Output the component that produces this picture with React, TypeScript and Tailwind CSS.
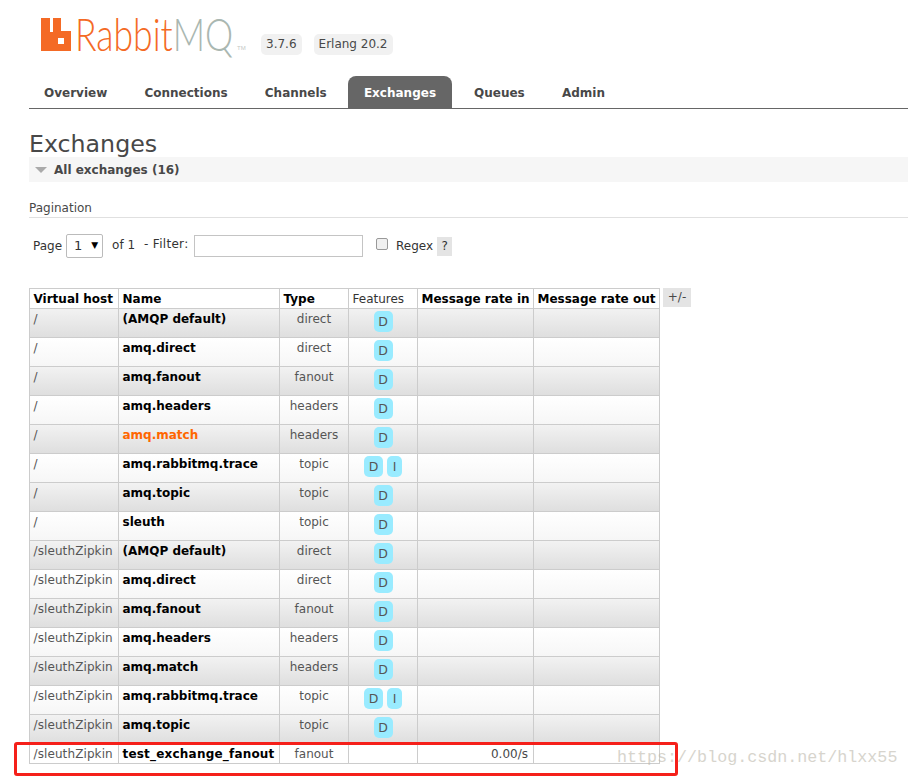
const tabs = ['Overview', 'Connections', 'Channels', 'Exchanges', 'Queues', 'Admin'];

const rows = [
  { vhost: '/', name: '(AMQP default)', type: 'direct', features: ['D'] },
  { vhost: '/', name: 'amq.direct', type: 'direct', features: ['D'] },
  { vhost: '/', name: 'amq.fanout', type: 'fanout', features: ['D'] },
  { vhost: '/', name: 'amq.headers', type: 'headers', features: ['D'] },
  { vhost: '/', name: 'amq.match', type: 'headers', features: ['D'], highlight: true },
  { vhost: '/', name: 'amq.rabbitmq.trace', type: 'topic', features: ['D', 'I'] },
  { vhost: '/', name: 'amq.topic', type: 'topic', features: ['D'] },
  { vhost: '/', name: 'sleuth', type: 'topic', features: ['D'] },
  { vhost: '/sleuthZipkin', name: '(AMQP default)', type: 'direct', features: ['D'] },
  { vhost: '/sleuthZipkin', name: 'amq.direct', type: 'direct', features: ['D'] },
  { vhost: '/sleuthZipkin', name: 'amq.fanout', type: 'fanout', features: ['D'] },
  { vhost: '/sleuthZipkin', name: 'amq.headers', type: 'headers', features: ['D'] },
  { vhost: '/sleuthZipkin', name: 'amq.match', type: 'headers', features: ['D'] },
  { vhost: '/sleuthZipkin', name: 'amq.rabbitmq.trace', type: 'topic', features: ['D', 'I'] },
  { vhost: '/sleuthZipkin', name: 'amq.topic', type: 'topic', features: ['D'] },
];

function Logo() {
  return (
    <div className="flex w-[204px] items-start">
      <svg width="30" height="33" viewBox="0 0 30 33" className="mt-[1px] shrink-0">
        <path
          fillRule="evenodd"
          fill="#f46a25"
          d="M0 0H9V14H12V0H20V13H30V33H0ZM17 20V26H23V20Z"
        />
      </svg>
      <span className="ml-[4px] -mt-[9px] origin-left scale-x-[0.79] font-['Lato'] text-[45px] leading-[52px] font-light whitespace-nowrap text-[#f46a25]">
        Rabbit<span className="text-[#aab7b1]">MQ</span>
      </span>
      <span className="absolute top-[44px] left-[237px] font-['Liberation_Sans'] text-[6px] leading-[8px] text-[#c4c9c6]">TM</span>
    </div>
  );
}

function Badge({ label }: { label: string }) {
  return (
    <span className="rounded-[5px] bg-[#f1f1f1] px-[5px] text-[12px] leading-[21px] text-[#484848]">{label}</span>
  );
}

export default function App() {
  return (
    <div className="relative h-[777px] w-[908px] overflow-hidden bg-white font-['DejaVu_Sans',sans-serif] text-[12px] text-[#484848]">
      <div className="flex h-[76px] items-start pt-[17px] pl-[41px]">
        <Logo />
        <div className="mt-[17px] ml-[16px] flex gap-[12px]">
          <Badge label="3.7.6" />
          <Badge label="Erlang 20.2" />
        </div>
      </div>

      <div className="ml-[29px] flex h-[33px] border-b border-[#666] pl-[15px]">
        {tabs.map((tab) => (
          <div
            key={tab}
            className={
              tab === 'Exchanges'
                ? '-ml-[16px] mr-[22px] rounded-t-[8px] bg-[#666] px-[16px] pt-[2px] text-[12px] leading-[30px] font-bold text-white'
                : 'mr-[37.2px] pt-[2px] text-[12px] leading-[30px] font-bold text-[#484848]'
            }
          >
            {tab}
          </div>
        ))}
      </div>

      <div className="ml-[29px]">
        <h1 className="mt-[22px] text-[23.7px] leading-[26px] font-normal text-[#484848]">Exchanges</h1>
        <div className="flex h-[25px] items-center bg-[#f6f6f6] pl-[6px]">
          <span className="h-0 w-0 border-x-[6px] border-t-[6px] border-x-transparent border-t-[#aaa]" />
          <span className="ml-[7px] text-[12px] font-bold text-[#484848]">All exchanges (16)</span>
        </div>

        <div className="mt-[19px] h-[17px] border-b border-[#e0e0e0] text-[12px] leading-[15px]">Pagination</div>

        <div className="mt-[15px] flex h-[25px] items-center pl-[4px] text-[#333]">
          <span>Page</span>
          <div className="ml-[4px] flex h-[24px] w-[37px] items-center rounded-[2px] border border-[#bbb] pl-[7px] text-[13px]">
            <span>1</span>
            <span className="ml-[9px] text-[9px] text-black">▼</span>
          </div>
          <span className="ml-[9px] -mt-[2px]">of 1</span>
          <span className="ml-[9px] -mt-[3px] tracking-[0.3px]">- Filter:</span>
          <div className="ml-[6px] h-[22px] w-[169px] border border-[#c4c4c4]" />
          <span className="ml-[13px] -mt-[4px] h-[12px] w-[12px] rounded-[2px] border border-[#999] bg-[#f0f0f0]" />
          <span className="ml-[7.5px] mt-[1px]">Regex</span>
          <span className="ml-[4px] mt-[1px] h-[19px] w-[15px] bg-[#e4e4e4] text-center leading-[19px]">?</span>
        </div>

        <div className="mt-[30px] flex items-start">
          <table className="w-[630px] table-fixed border-collapse text-[12px]">
            <colgroup>
              <col className="w-[89px]" />
              <col className="w-[161px]" />
              <col className="w-[69px]" />
              <col className="w-[69px]" />
              <col className="w-[116px]" />
              <col className="w-[126px]" />
            </colgroup>
            <thead>
              <tr className="h-[20px]">
                <th className="border border-[#ccc] px-[3.5px] text-left leading-[18px] font-bold whitespace-nowrap text-black">Virtual host</th>
                <th className="border border-[#ccc] px-[3.5px] text-left leading-[18px] font-bold text-black">Name</th>
                <th className="border border-[#ccc] px-[3.5px] text-left leading-[18px] font-bold text-black">Type</th>
                <th className="border border-[#ccc] px-[3.5px] text-left leading-[18px] font-normal text-[#333]">Features</th>
                <th className="border border-[#ccc] px-[3.5px] text-left leading-[18px] font-bold whitespace-nowrap text-black">Message rate in</th>
                <th className="border border-[#ccc] px-[3.5px] text-left leading-[18px] font-bold whitespace-nowrap text-black">Message rate out</th>
              </tr>
            </thead>
            <tbody>
              {rows.map((row, i) => (
                <tr
                  key={i}
                  className={`h-[29px] ${i % 2 === 0 ? 'bg-gradient-to-b from-[#f2f2f2] to-[#dedede]' : 'bg-gradient-to-b from-white to-[#f6f6f6]'}`}
                >
                  <td className="border border-[#ccc] px-[3.5px] pt-[2px] align-top leading-[16px] tracking-[0.1px] whitespace-nowrap text-[#555]">{row.vhost}</td>
                  <td className={`border border-[#ccc] px-[3.5px] pt-[2px] align-top leading-[16px] font-bold whitespace-nowrap ${row.highlight ? 'text-[#f60]' : 'text-black'}`}>
                    {row.name}
                  </td>
                  <td className="border border-[#ccc] px-[3px] pt-[2px] text-center align-top leading-[16px] text-[#555]">{row.type}</td>
                  <td className="border border-[#ccc] p-0 align-top">
                    <div className="flex justify-center gap-[4px] pt-[2px]">
                      {row.features.map((f) => (
                        <span key={f} className={`h-[21px] rounded-[5px] bg-[#99ebff] text-center text-[12.5px] leading-[21px] text-[#555] ${f === 'D' ? 'w-[19px]' : 'w-[15px]'}`}>
                          {f}
                        </span>
                      ))}
                    </div>
                  </td>
                  <td className="border border-[#ccc]" />
                  <td className="border border-[#ccc]" />
                </tr>
              ))}
              <tr className="h-[20px]">
                <td className="border border-[#ccc] px-[3.5px] pt-[2px] align-top leading-[16px] tracking-[0.1px] whitespace-nowrap text-[#555]">/sleuthZipkin</td>
                <td className="border border-[#ccc] px-[3.5px] pt-[2px] align-top leading-[16px] font-bold tracking-[0.2px] whitespace-nowrap text-black">test_exchange_fanout</td>
                <td className="border border-[#ccc] px-[3px] pt-[2px] text-center align-top leading-[16px] text-[#555]">fanout</td>
                <td className="border border-[#ccc]" />
                <td className="border border-[#ccc] px-[5px] pt-[2px] text-right align-top leading-[16px] text-[#484848]">0.00/s</td>
                <td className="border border-[#ccc]" />
              </tr>
            </tbody>
          </table>
          <span className="ml-[3px] h-[19px] w-[28px] bg-[#e4e4e4] text-center text-[12px] leading-[19px]">+/-</span>
        </div>
      </div>

      {/* annotation drawn over the screenshot */}
      <div className="absolute top-[742px] left-[14px] h-[34px] w-[664px] rounded-[3px] border-[3px] border-[#f5201a]" />
      <div className="absolute top-[746px] left-[617px] font-['Liberation_Mono',monospace] text-[16.7px] leading-[24px] text-[#bdb9ac] opacity-60">
        https://blog.csdn.net/hlxx55
      </div>
    </div>
  );
}
